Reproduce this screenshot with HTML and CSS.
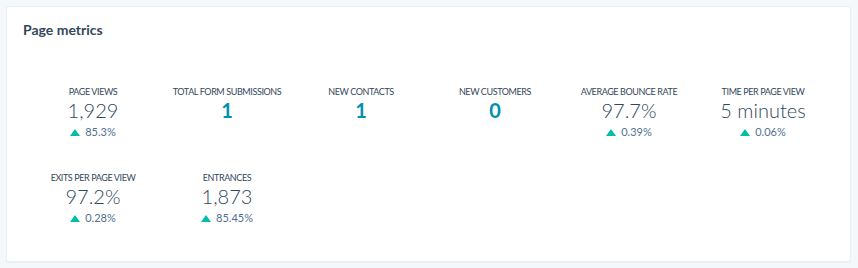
FILE: index.html
```html
<!DOCTYPE html>
<html lang="en">
<head>
    <meta charset="UTF-8">
    <title>Page metrics</title>
    <link rel="stylesheet" href="styles.css">
</head>
<body>
    <div class="card">
        <h2 class="card__title">Page metrics</h2>
        <div class="metrics">
            <div class="metric">
                <p class="metric__label">Page views</p>
                <p class="metric__value">1,929</p>
                <p class="metric__change"><span class="up"></span>85.3%</p>
            </div>
            <div class="metric">
                <p class="metric__label">Total form submissions</p>
                <p class="metric__value metric__value--link">1</p>
            </div>
            <div class="metric">
                <p class="metric__label">New contacts</p>
                <p class="metric__value metric__value--link">1</p>
            </div>
            <div class="metric">
                <p class="metric__label">New customers</p>
                <p class="metric__value metric__value--link">0</p>
            </div>
            <div class="metric">
                <p class="metric__label">Average bounce rate</p>
                <p class="metric__value">97.7%</p>
                <p class="metric__change"><span class="up"></span>0.39%</p>
            </div>
            <div class="metric">
                <p class="metric__label">Time per page view</p>
                <p class="metric__value">5 minutes</p>
                <p class="metric__change"><span class="up"></span>0.06%</p>
            </div>
            <div class="metric">
                <p class="metric__label">Exits per page view</p>
                <p class="metric__value">97.2%</p>
                <p class="metric__change"><span class="up"></span>0.28%</p>
            </div>
            <div class="metric">
                <p class="metric__label">Entrances</p>
                <p class="metric__value">1,873</p>
                <p class="metric__change"><span class="up"></span>85.45%</p>
            </div>
        </div>
    </div>
</body>
</html>
```

FILE: styles.css
```css
*{
    padding: 0;
    margin: 0;
    box-sizing: border-box;
}
body{
    background-color: #f5f8fa;
    font-family: Lato, "Liberation Sans", sans-serif;
    color: #33475b;
    padding: 6px 7px 6px 6px;
}
.card{
    background-color: #fff;
    border: 1px solid #eaf0f6;
    border-radius: 3px;
    height: 256px;
    padding: 13px 20px 0 19px;
    box-shadow: 0 1px 2px rgba(45, 62, 80, 0.06);
}
.card__title{
    font-size: 14px;
    font-weight: 700;
    line-height: 20px;
    margin-left: -3px;
}
.metrics{
    display: grid;
    grid-template-columns: repeat(6, 1fr);
    grid-auto-rows: 86px;
    margin-top: 46px;
}
.metric{
    text-align: center;
}
.metric__label{
    font-size: 9px;
    letter-spacing: -0.4px;
    text-transform: uppercase;
    line-height: 12px;
}
.metric__value{
    font-size: 20px;
    font-weight: 300;
    line-height: 22px;
    margin-top: 1px;
}
.metric__value--link{
    color: #0091ae;
    font-weight: 700;
}
.metric__change{
    font-size: 11px;
    color: #516f90;
    line-height: 14px;
    margin-top: 4px;
}
.up{
    display: inline-block;
    width: 0;
    height: 0;
    border-left: 5px solid transparent;
    border-right: 5px solid transparent;
    border-bottom: 7px solid #00bda5;
    margin-right: 5px;
    vertical-align: 0;
}
```
